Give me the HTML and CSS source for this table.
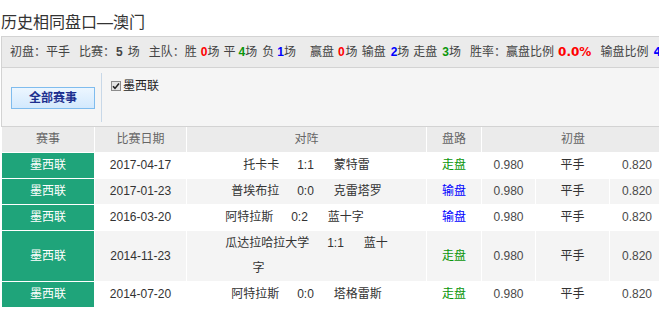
FILE: index.html
```html
<!DOCTYPE html>
<html lang="zh-CN">
<head>
<meta charset="utf-8">
<title>历史相同盘口—澳门</title>
<link rel="stylesheet" href="styles.css">
</head>
<body>
<div class="page">
  <h2 class="title">历史相同盘口—澳门</h2>
  <div class="stats">
    <span>初盘：平手</span>
    <span class="m9">比赛：</span><b class="m1">5</b><span class="m5">场</span>
    <span class="m9">主队：</span><span>胜</span><b class="red m4">0</b><span>场</span>
    <span class="m4">平</span><b class="green m3">4</b><span>场</span>
    <span class="m5">负</span><b class="blue m3">1</b><span>场</span>
    <span class="m14">赢盘</span><b class="red m4">0</b><span class="m1">场</span>
    <span class="m4">输盘</span><b class="blue m5">2</b><span>场</span>
    <span class="m4">走盘</span><b class="green m5">3</b><span>场</span>
    <span class="m9">胜率：</span><span>赢盘比例</span><b class="pct red m4">0.0%</b>
    <span class="m9">输盘比例</span><b class="pct blue m5">40.0%</b>
    <span class="m9">走盘比例</span><b class="pct green m5">60.0%</b>
  </div>
  <div class="filter">
    <div class="filter-left">
      <button class="btn" type="button">全部赛事</button>
    </div>
    <div class="filter-right">
      <label class="league">
        <svg class="chk" width="10" height="10" viewBox="0 0 10 10" aria-hidden="true">
          <rect x="0.5" y="0.5" width="9" height="9" fill="#e4e4e4" stroke="#8c8c8c"/>
          <path d="M2 5.2 L4 7.4 L8 2.6" fill="none" stroke="#222" stroke-width="1.6"/>
        </svg>
        <span>墨西联</span>
      </label>
    </div>
  </div>
  <table class="tbl">
    <colgroup>
      <col class="c-lg"><col class="c-date"><col class="c-vs"><col class="c-res">
      <col class="c-o1"><col class="c-o2"><col class="c-o3">
      <col class="c-o1"><col class="c-o2"><col class="c-o3">
    </colgroup>
    <thead>
      <tr>
        <th>赛事</th><th>比赛日期</th><th>对阵</th><th>盘路</th><th colspan="3">初盘</th><th colspan="3">终盘</th>
      </tr>
    </thead>
    <tbody>
      <tr>
        <td class="lg">墨西联</td><td>2017-04-17</td>
        <td class="vs"><span>托卡卡</span><span class="score">1:1</span><span>蒙特雷</span></td>
        <td class="draw">走盘</td><td class="num">0.980</td><td>平手</td><td class="num">0.820</td>
        <td class="num">0.950</td><td>平手</td><td class="num">0.850</td>
      </tr>
      <tr class="alt">
        <td class="lg">墨西联</td><td>2017-01-23</td>
        <td class="vs"><span>普埃布拉</span><span class="score">0:0</span><span>克雷塔罗</span></td>
        <td class="lose">输盘</td><td class="num">0.980</td><td>平手</td><td class="num">0.820</td>
        <td class="num">0.950</td><td>平手</td><td class="num">0.850</td>
      </tr>
      <tr>
        <td class="lg">墨西联</td><td>2016-03-20</td>
        <td class="vs"><span>阿特拉斯</span><span class="score">0:2</span><span class="tail2">蓝十字</span></td>
        <td class="lose">输盘</td><td class="num">0.980</td><td>平手</td><td class="num">0.820</td>
        <td class="num">0.950</td><td>平手</td><td class="num">0.850</td>
      </tr>
      <tr class="alt">
        <td class="lg">墨西联</td><td>2014-11-23</td>
        <td class="vs"><span>瓜达拉哈拉大学</span><span class="score">1:1</span><span class="tail8">蓝十字</span></td>
        <td class="draw">走盘</td><td class="num">0.980</td><td>平手</td><td class="num">0.820</td>
        <td class="num">0.950</td><td>平手</td><td class="num">0.850</td>
      </tr>
      <tr>
        <td class="lg">墨西联</td><td>2014-07-20</td>
        <td class="vs"><span>阿特拉斯</span><span class="score">0:0</span><span>塔格雷斯</span></td>
        <td class="draw">走盘</td><td class="num">0.980</td><td>平手</td><td class="num">0.820</td>
        <td class="num">0.950</td><td>平手</td><td class="num">0.850</td>
      </tr>
    </tbody>
  </table>
</div>
</body>
</html>
```

FILE: styles.css
```css
html, body {
  margin: 0;
  padding: 0;
  overflow: hidden;
  background: #fff;
}

body {
  font-family: "Liberation Sans", "Noto Sans CJK SC", sans-serif;
  font-size: 12px;
  color: #333;
}

.page {
  width: 1000px;
  padding-left: 1px;
}

.title {
  margin: 0;
  padding-top: 11px;
  height: 25px;
  font-size: 16px;
  font-weight: normal;
  line-height: 24px;
  color: #333;
}

.stats {
  display: flex;
  align-items: center;
  height: 30px;
  line-height: 30px;
  padding-left: 8px;
  border: 1px solid #d3d3d3;
  border-right: 0;
  background: #ebebeb;
  white-space: nowrap;
  color: #444;
}

.stats b {
  font-weight: bold;
}

.stats .pct {
  font-family: "DejaVu Sans", sans-serif;
}

.m1 { margin-left: 1px; }
.m3 { margin-left: 3px; }
.m4 { margin-left: 4px; }
.m5 { margin-left: 5px; }
.m9 { margin-left: 9px; }
.m14 { margin-left: 14px; }

.red { color: #f00; }
.green { color: #0a960a; }
.blue { color: #00f; }

.filter {
  display: flex;
  height: 58px;
  background: #f5f5f5;
  border-left: 1px solid #d3d3d3;
  border-bottom: 1px solid #d3d3d3;
}

.filter-left {
  width: 99px;
  margin: 5px 0 4px;
  border-right: 1px solid #c8d8e8;
  display: flex;
  align-items: center;
}

.btn {
  margin: 0 0 0 9px;
  width: 84px;
  height: 22px;
  padding: 0;
  box-sizing: border-box;
  border: 1px solid #7fbcee;
  background: linear-gradient(#ecf6ff, #d3e9fd);
  color: #1d2f8f;
  font-family: "Liberation Sans", "Noto Sans CJK SC", sans-serif;
  font-size: 12px;
  font-weight: bold;
  line-height: 20px;
}

.filter-right {
  padding: 10px 0 0 9px;
}

.league {
  display: flex;
  align-items: center;
  gap: 2px;
  line-height: 16px;
  color: #222;
}

.chk {
  display: block;
}

.tbl {
  border-collapse: collapse;
  table-layout: fixed;
  width: 845px;
}

.c-lg { width: 93px; }
.c-date { width: 92px; }
.c-vs { width: 240px; }
.c-res { width: 55px; }
.c-o1 { width: 54px; }
.c-o2 { width: 74px; }
.c-o3 { width: 55px; }

.tbl th,
.tbl td {
  border: 1px solid #fff;
  padding: 0;
  text-align: center;
  line-height: 25px;
  font-weight: normal;
  white-space: normal;
}

.tbl thead th {
  border-top: 0;
  background: #ebebeb;
  color: #666;
}

.tbl td {
  background: #fff;
  color: #333;
}

.tbl tr.alt td {
  background: #f4f4f4;
}

.tbl tr td.lg {
  background: #1fa47a;
  color: #fff;
}

.tbl td.num {
  color: #4a4a4a;
}

.score {
  margin: 0 20px 0 18px;
}

.tail2 { padding-right: 24px; }
.tail8 { padding-right: 96px; }

.tbl td.draw { color: #0a960a; }
.tbl td.lose { color: #00f; }
```
